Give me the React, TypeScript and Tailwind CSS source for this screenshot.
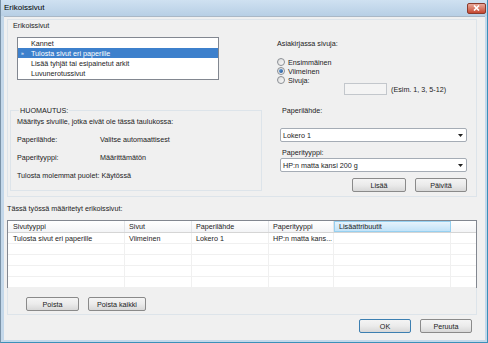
import React from "react";

function Radio({ checked }: { checked?: boolean }) {
  return (
    <div className="w-[8px] h-[8px] rounded-full border border-[#8b8f94] bg-gradient-to-br from-[#dcdcdc] to-[#fbfbfb] flex items-center justify-center shrink-0">
      {checked && <div className="w-[4px] h-[4px] rounded-full bg-gradient-to-br from-[#6aa6e0] to-[#1c4f91]" />}
    </div>
  );
}

function Btn({ label, w, def }: { label: string; w: string; def?: boolean }) {
  return (
    <div
      className={`${w} h-[14px] rounded-[2px] border ${def ? "border-[#3c7fb1]" : "border-[#8a8a8a]"} bg-gradient-to-b from-[#f4f4f4] via-[#ebebeb] to-[#d8d8d8] flex items-center justify-center`}
    >
      {label}
    </div>
  );
}

function Select({ value }: { value: string }) {
  return (
    <div className="w-[187px] h-[14px] border border-[#a5acb5] rounded-[2px] bg-white flex items-center justify-between pl-[2px] pr-[3px]">
      <span>{value}</span>
      <svg width="5" height="3" viewBox="0 0 5 3">
        <path d="M0 0 L5 0 L2.5 3 Z" fill="#222" />
      </svg>
    </div>
  );
}

const cols = ["w-[117px]", "w-[67px]", "w-[77px]", "w-[65px]", "w-[117px]", "flex-1"];

export default function App() {
  const header = ["Sivutyyppi", "Sivut", "Paperilähde", "Paperityyppi", "Lisäattribuutit", ""];
  const row1 = ["Tulosta sivut eri paperille", "Viimeinen", "Lokero 1", "HP:n matta kans...", "", ""];
  const empty = ["", "", "", "", "", ""];
  return (
    <div className="w-[488px] h-[343px] flex flex-col overflow-hidden font-['Liberation_Sans',Arial,sans-serif] text-[7.2px] leading-[9px] text-[#1b1b1b] bg-[#c4d8ea] border-l border-l-[#7b93a8] border-r border-r-[#3b90b9] border-b border-b-[#3b90b9]">
      {/* Title bar */}
      <div className="h-[16px] shrink-0 flex items-center justify-between bg-gradient-to-b from-[#cfe1f1] to-[#b7cfe5] pl-[3px] pr-[1px]">
        <span className="text-[8px] leading-[10px] text-black">Erikoissivut</span>
        <div className="w-[19px] h-[11px] rounded-[2px] bg-gradient-to-b from-[#e8a89a] to-[#c4452f] border border-[#8a3a2c] flex items-center justify-center">
          <svg width="7" height="6" viewBox="0 0 7 6">
            <path d="M1 0.5 L6 5.5 M6 0.5 L1 5.5" stroke="#fff" strokeWidth="1.6" />
          </svg>
        </div>
      </div>

      {/* Body */}
      <div className="flex-1 flex flex-col bg-[#f0f0f0] ml-[3px] mr-[2px] mb-[2px] border-t border-[#aab8c6]">
        {/* Top group */}
        <div className="ml-[3px] mt-[2px] w-[470px] h-[178px] border border-[#dde4ea] flex flex-col">
          {/* Row A */}
          <div className="h-[80px] flex">
            <div className="w-[254px] pl-[5px] pt-[1px] flex flex-col">
              <div className="h-[9px]">Erikoissivut</div>
              <div className="ml-[4px] mt-[7px] w-[202px] h-[43px] border border-[#828790] bg-white flex flex-col">
                <div className="h-[10px] flex items-center pl-[13px]">Kannet</div>
                <div className="h-[10px] flex items-center bg-[#3d80cc] text-white">
                  <span className="w-[13px] pl-[3px] text-[5px]">»</span>
                  <span>Tulosta sivut eri paperille</span>
                </div>
                <div className="h-[10px] flex items-center pl-[13px]">Lisää tyhjät tai esipainetut arkit</div>
                <div className="h-[10px] flex items-center pl-[13px]">Luvunerotussivut</div>
              </div>
            </div>
            <div className="flex-1 pl-[15px] pt-[18.5px] flex flex-col">
              <div className="h-[9px]">Asiakirjassa sivuja:</div>
              <div className="mt-[10px] h-[9px] flex items-center gap-[3px]">
                <Radio />
                <span>Ensimmäinen</span>
              </div>
              <div className="h-[9px] flex items-center gap-[3px]">
                <Radio checked />
                <span>Viimeinen</span>
              </div>
              <div className="flex items-start">
                <div className="w-[67px] h-[9px] flex items-center gap-[3px]">
                  <Radio />
                  <span>Sivuja:</span>
                </div>
                <div className="mt-[7.5px] w-[43px] h-[12px] border border-[#c3c7cc] bg-[#f4f4f4]" />
                <div className="ml-[4px] mt-[9px]">(Esim. 1, 3, 5-12)</div>
              </div>
            </div>
          </div>
          {/* Row B */}
          <div className="flex-1 flex">
            <fieldset className="ml-[2px] mt-[5.5px] w-[252px] h-[85px] border border-[#dde4ea] px-[6px]">
              <legend className="ml-[2px] px-[1px] leading-[9px]">HUOMAUTUS:</legend>
              <div className="mt-[2px] flex flex-col gap-[9px]">
                <div className="h-[9px] whitespace-nowrap">Määritys sivuille, jotka eivät ole tässä taulukossa:</div>
                <div className="h-[9px] flex whitespace-nowrap">
                  <span className="w-[83px] shrink-0">Paperilähde:</span>
                  <span>Valitse automaattisest</span>
                </div>
                <div className="h-[9px] flex whitespace-nowrap">
                  <span className="w-[83px] shrink-0">Paperityyppi:</span>
                  <span>Määrittämätön</span>
                </div>
                <div className="h-[9px] whitespace-nowrap">Tulosta molemmat puolet: Käytössä</div>
              </div>
            </fieldset>
            <div className="flex-1 pl-[18px] pt-[5.5px] flex flex-col">
              <div className="h-[9px] pl-[2px]">Paperilähde:</div>
              <div className="mt-[13.5px]">
                <Select value="Lokero 1" />
              </div>
              <div className="mt-[5.5px] h-[9px] pl-[2px]">Paperityyppi:</div>
              <div className="mt-[1.5px]">
                <Select value="HP:n matta kansi 200 g" />
              </div>
              <div className="mt-[6px] w-[187px] flex justify-end gap-[9px]">
                <Btn label="Lisää" w="w-[54px]" />
                <Btn label="Päivitä" w="w-[52px]" />
              </div>
            </div>
          </div>
        </div>

        {/* Table label */}
        <div className="ml-[3px] mt-[7px] h-[9px]">Tässä työssä määritetyt erikoissivut:</div>

        {/* Table group */}
        <div className="ml-[3px] mt-[7px] w-[470px] h-[95px] border-x border-b border-[#dde4ea] flex flex-col">
          <div className="-ml-px w-[470px] h-[68px] border border-[#828790] bg-white flex flex-col">
            <div className="h-[15px] flex bg-gradient-to-b from-white to-[#f3f4f6] border-b border-[#d5d5d5]">
              {header.map((h, i) => (
                <div
                  key={i}
                  className={`${cols[i]} h-full flex items-center ${i === 0 ? "pl-[5px]" : "pl-[4px]"} ${
                    i === 4
                      ? "bg-gradient-to-b from-[#e6f3fc] to-[#c2e3f8] border border-[#96d0f0]"
                      : i < 5
                      ? "border-r border-[#e3e5e8]"
                      : ""
                  }`}
                >
                  {h}
                </div>
              ))}
            </div>
            {[row1, empty, empty, empty, empty].map((r, ri) => (
              <div key={ri} className="h-[11px] flex border-b border-[#f0f0f0] shrink-0">
                {r.map((c, i) => (
                  <div
                    key={i}
                    className={`${cols[i]} h-full flex items-center overflow-hidden whitespace-nowrap ${
                      i === 0 ? "pl-[5px]" : "pl-[4px]"
                    } ${i < 5 ? "border-r border-[#f0f0f0]" : ""}`}
                  >
                    {c}
                  </div>
                ))}
              </div>
            ))}
          </div>
          <div className="mt-[9px] flex">
            <div className="ml-[18px]">
              <Btn label="Poista" w="w-[53px]" />
            </div>
            <div className="ml-[9px]">
              <Btn label="Poista kaikki" w="w-[58px]" />
            </div>
          </div>
        </div>

        {/* OK row */}
        <div className="mt-[4px] flex justify-end pr-[13px] gap-[9px]">
          <Btn label="OK" w="w-[52px]" def />
          <Btn label="Peruuta" w="w-[52px]" />
        </div>
      </div>
    </div>
  );
}
